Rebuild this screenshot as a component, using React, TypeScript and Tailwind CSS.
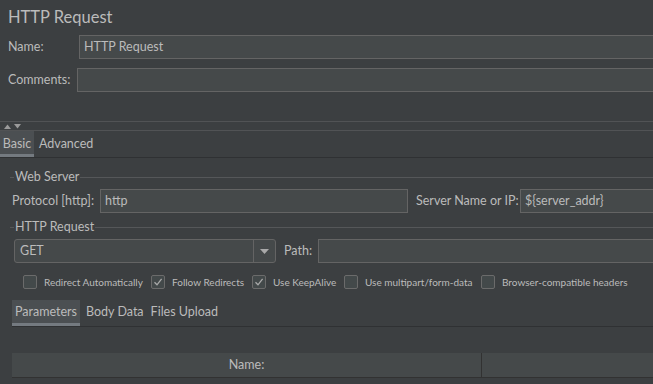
import React from "react";

const font = { fontFamily: 'Lato, "Noto Sans", sans-serif' };

const Input = ({ value, className }: any) => (
  <div
    className={
      "h-[24px] border border-[#646464] bg-[#45494a] flex items-center px-[4px] text-[12.5px] text-[#bbbbbb] " +
      (className || "")
    }
  >
    {value}
  </div>
);

const GroupTitle = ({ title }: any) => (
  <div className="flex items-center h-[16px] pl-[10px] pr-0">
    <div className="w-[4px] h-px bg-[#555759]" />
    <span className="px-[1px] text-[12.5px] text-[#bbbbbb] leading-none">{title}</span>
    <div className="flex-1 h-px bg-[#555759]" />
  </div>
);

const Check = ({ label, checked }: any) => (
  <div className="flex items-center gap-[7px]">
    <div className="w-[14px] h-[14px] rounded-[2px] border border-[#6b6b6b] bg-[#43494a] flex items-center justify-center">
      {checked && (
        <svg width="10" height="10" viewBox="0 0 10 10">
          <path d="M1.5 5.2 L4 7.8 L8.6 1.8" fill="none" stroke="#a9a9a9" strokeWidth="1.3" />
        </svg>
      )}
    </div>
    <span className="text-[10px] text-[#bbbbbb] whitespace-nowrap">{label}</span>
  </div>
);

export default function App() {
  return (
    <div
      className="w-[653px] h-[384px] overflow-hidden bg-[#3c3f41] text-[#bbbbbb] flex flex-col"
      style={font}
    >
      <div className="h-[35px] pl-[8px] pt-[4px] text-[16.5px] leading-[26px]">HTTP Request</div>

      <div className="flex items-center h-[24px]">
        <span className="w-[79px] pl-[8px] text-[12.5px]">Name:</span>
        <Input value="HTTP Request" className="flex-1 -mr-[10px]" />
      </div>
      <div className="flex items-center h-[24px] mt-[9px]">
        <span className="w-[77px] pl-[8px] text-[12.5px]">Comments:</span>
        <Input value="" className="flex-1 -mr-[10px]" />
      </div>

      <div className="mt-[29px] h-px bg-[#515355]" />
      <div className="h-[8px] flex items-center gap-[3px] pl-[4px]">
        <svg width="7" height="5" viewBox="0 0 7 5">
          <path d="M0 5 L3.5 0.5 L7 5 Z" fill="#9a9a9a" />
        </svg>
        <svg width="7" height="5" viewBox="0 0 7 5">
          <path d="M0 0 L7 0 L3.5 4.5 Z" fill="#9a9a9a" />
        </svg>
      </div>
      <div className="h-px bg-[#515355]" />

      <div className="flex h-[27px] border-b border-[#2f3133]">
        <div className="relative w-[34px] bg-[#4b4f52] flex items-center justify-center text-[12.5px]">
          Basic
          <div className="absolute left-0 right-0 bottom-0 h-[3px] bg-[#747a80]" />
        </div>
        <div className="px-[5px] flex items-center text-[12.5px]">Advanced</div>
      </div>

      <div className="mt-[11px]">
        <GroupTitle title="Web Server" />
      </div>
      <div className="flex items-center h-[24px] mt-[4px] pl-[12px]">
        <span className="w-[88px] text-[12.5px] whitespace-nowrap">Protocol [http]:</span>
        <Input value="http" className="w-[308px]" />
        <span className="ml-[8px] w-[104px] text-[12.5px] whitespace-nowrap">Server Name or IP:</span>
        <Input value="${server_addr}" className="flex-1 -mr-[10px]" />
      </div>

      <div className="mt-[6px]">
        <GroupTitle title="HTTP Request" />
      </div>
      <div className="flex items-center h-[24px] mt-[4px] pl-[14px]">
        <div className="w-[262px] h-[24px] flex border border-[#646464] rounded-[3px] bg-[#45494a]">
          <div className="flex-1 flex items-center px-[5px] text-[12.5px]">GET</div>
          <div className="w-[22px] border-l border-[#646464] flex items-center justify-center">
            <svg width="9" height="5" viewBox="0 0 9 5">
              <path d="M0 0 L9 0 L4.5 5 Z" fill="#a9a9a9" />
            </svg>
          </div>
        </div>
        <span className="ml-[8px] w-[34px] text-[12.5px]">Path:</span>
        <Input value="" className="flex-1 -mr-[10px]" />
      </div>

      <div className="flex items-center h-[20px] mt-[9px] pl-[23px]">
        <div className="w-[128px]">
          <Check label="Redirect Automatically" />
        </div>
        <div className="w-[101px]">
          <Check label="Follow Redirects" checked />
        </div>
        <div className="w-[92px]">
          <Check label="Use KeepAlive" checked />
        </div>
        <div className="w-[137px]">
          <Check label="Use multipart/form-data" />
        </div>
        <Check label="Browser-compatible headers" />
      </div>

      <div className="mt-[8px] ml-[12px] flex h-[27px] border-b border-[#2f3133]">
        <div className="relative w-[68px] bg-[#4b4f52] flex items-center justify-center pb-[1px] text-[12.5px]">
          Parameters
          <div className="absolute left-0 right-0 bottom-0 h-[3px] bg-[#747a80]" />
        </div>
        <div className="px-[6px] flex items-center pb-[1px] text-[12.5px]">Body Data</div>
        <div className="px-[1px] flex items-center pb-[1px] text-[12.5px]">Files Upload</div>
      </div>

      <div className="mt-[26px] ml-[12px] flex h-[25px] bg-[#45494a] border-b border-[#323232]">
        <div className="w-[470px] flex items-center justify-center text-[12.5px] border-r border-[#323232]">
          Name:
        </div>
        <div className="flex-1" />
      </div>
    </div>
  );
}
